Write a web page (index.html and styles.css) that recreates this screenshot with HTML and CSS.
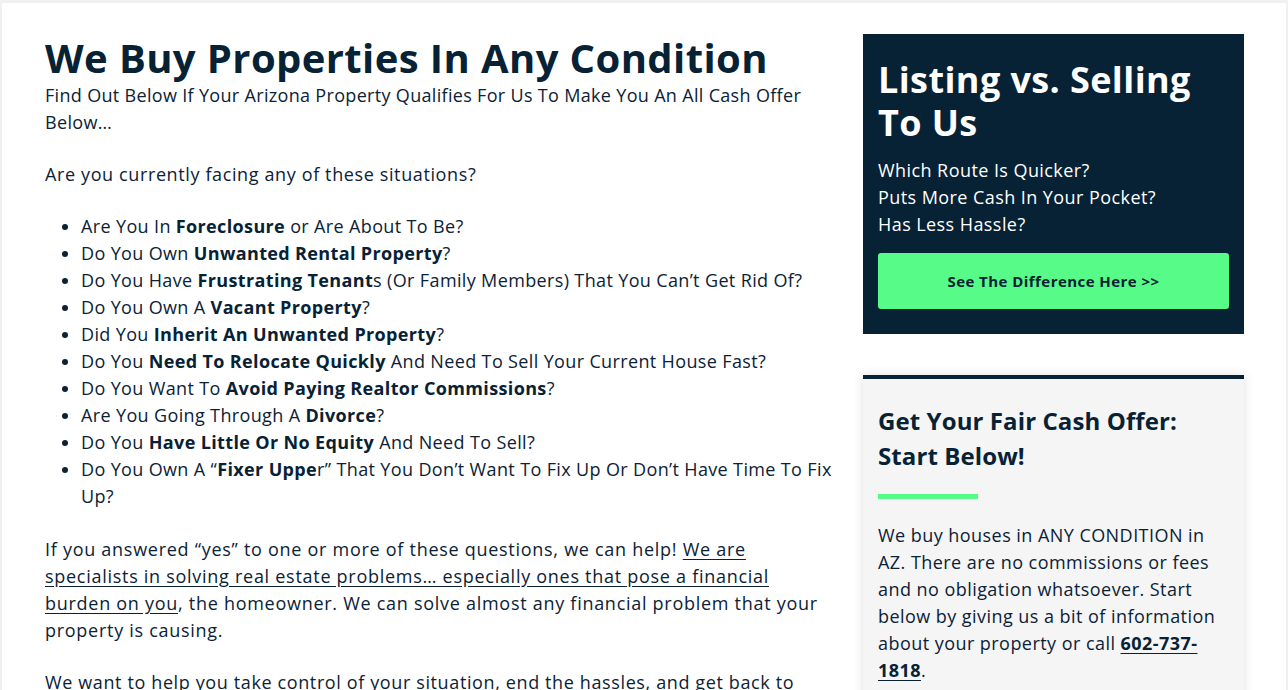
FILE: index.html
```html
<!DOCTYPE html>
<html lang="en">
<head>
<meta charset="utf-8">
<title>We Buy Properties In Any Condition</title>
<link rel="stylesheet" href="styles.css">
</head>
<body>
<div class="page">
  <main class="main">
    <h1 class="title">We Buy Properties In Any Condition</h1>
    <p class="lead">Find Out Below If Your Arizona Property Qualifies For Us To Make You An All Cash Offer Below…</p>
    <p>Are you currently facing any of these situations?</p>
    <ul class="list">
      <li>Are You In <b>Foreclosure</b> or Are About To Be?</li>
      <li>Do You Own <b>Unwanted Rental Property</b>?</li>
      <li>Do You Have <b>Frustrating Tenant</b>s (Or Family Members) That You Can’t Get Rid Of?</li>
      <li>Do You Own A <b>Vacant Property</b>?</li>
      <li>Did You <b>Inherit An Unwanted Property</b>?</li>
      <li>Do You <b>Need To Relocate Quickly</b> And Need To Sell Your Current House Fast?</li>
      <li>Do You Want To <b>Avoid Paying Realtor Commissions</b>?</li>
      <li>Are You Going Through A <b>Divorce</b>?</li>
      <li>Do You <b>Have Little Or No Equity</b> And Need To Sell?</li>
      <li>Do You Own A “<b>Fixer Uppe</b>r” That You Don’t Want To Fix Up Or Don’t Have Time To Fix Up?</li>
    </ul>
    <p class="help">If you answered “yes” to one or more of these questions, we can help! <a class="link" href="#">We are specialists in solving real estate problems… especially ones that pose a financial burden on you</a>, the homeowner. We can solve almost any financial problem that your property is causing.</p>
    <p>We want to help you take control of your situation, end the hassles, and get back to living your life, free of worry about this property.</p>
  </main>
  <aside class="side">
    <section class="promo">
      <h2 class="promo-title">Listing vs. Selling To Us</h2>
      <p class="promo-text">Which Route Is Quicker?<br>Puts More Cash In Your Pocket?<br>Has Less Hassle?</p>
      <a class="btn" href="#">See The Difference Here &gt;&gt;</a>
    </section>
    <section class="offer">
      <h3 class="offer-title">Get Your Fair Cash Offer: Start Below!</h3>
      <div class="bar"></div>
      <p class="offer-text">We buy houses in ANY CONDITION in AZ. There are no commissions or fees and no obligation whatsoever. Start below by giving us a bit of information about your property or call <a class="phone" href="#">602-737-1818</a>.</p>
    </section>
  </aside>
</div>
</body>
</html>
```

FILE: styles.css
```css
html, body {
  margin: 0;
  padding: 0;
}
body {
  background: #f0f0f0;
  font-family: "Open Sans", "Noto Sans", sans-serif;
  color: #0b2236;
  height: 690px;
  overflow: hidden;
}
.page {
  margin: 3px 2px 0 2px;
  background: #ffffff;
  display: flex;
  gap: 31px;
  padding: 31px 42px 0 43px;
  min-height: 700px;
}
.main {
  width: 787px;
  flex: none;
  font-size: 18px;
  line-height: 27px;
  letter-spacing: 0.62px;
}
.title {
  margin: 0;
  font-size: 40px;
  line-height: 48px;
  font-weight: 700;
  color: #072135;
  letter-spacing: 0.4px;
}
.main p {
  margin: 0 0 25px;
}
.main p.lead {
  letter-spacing: 0.32px;
}
.main p.help {
  letter-spacing: 0.72px;
}
.list {
  margin: 0 0 26px;
  padding-left: 36px;
  letter-spacing: 0.36px;
}
.list b {
  font-weight: 700;
  color: #072135;
}
.link {
  color: inherit;
  text-decoration: underline;
  text-underline-offset: 3px;
}
.side {
  width: 381px;
  flex: none;
  display: flex;
  flex-direction: column;
  gap: 41px;
}
.promo {
  background: #072135;
  color: #ffffff;
  padding: 24px 15px 25px;
}
.promo-title {
  margin: 0 0 13px;
  font-size: 36px;
  line-height: 43px;
  font-weight: 700;
  letter-spacing: 0.4px;
}
.promo-text {
  margin: 0 0 15px;
  font-size: 18px;
  line-height: 27px;
  letter-spacing: 0.43px;
}
.btn {
  display: flex;
  align-items: center;
  justify-content: center;
  height: 56px;
  background: #56fc87;
  border-radius: 3px;
  color: #072135;
  font-weight: 700;
  font-size: 15px;
  letter-spacing: 0.45px;
  text-decoration: none;
}
.offer {
  background: #f5f5f5;
  border-top: 4px solid #072135;
  box-shadow: 0 0 10px rgba(0, 0, 0, 0.12);
  padding: 24px 15px 30px;
}
.offer-title {
  margin: 0;
  font-size: 24px;
  line-height: 35px;
  font-weight: 700;
  color: #072135;
  letter-spacing: 0.1px;
}
.bar {
  width: 100px;
  height: 5px;
  background: #56fc87;
  margin: 21px 0 23px;
}
.offer-text {
  margin: 0;
  font-size: 18px;
  line-height: 27px;
  letter-spacing: 0.45px;
}
.phone {
  color: #072135;
  font-weight: 700;
  text-decoration: underline;
  text-underline-offset: 3px;
}
```
